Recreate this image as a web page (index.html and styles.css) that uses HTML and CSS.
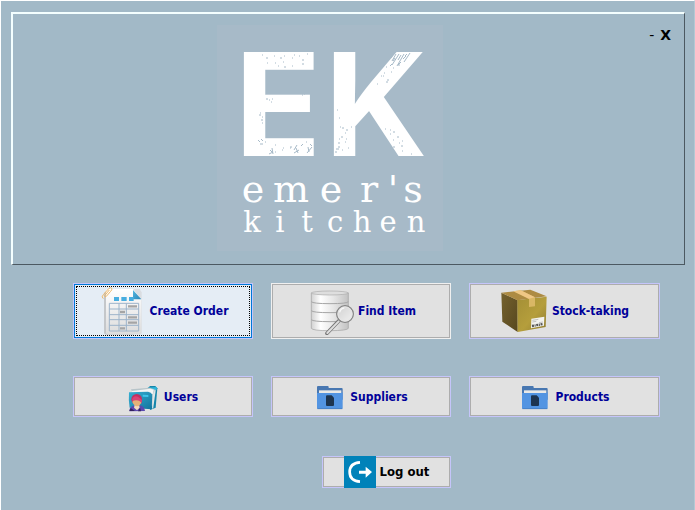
FILE: index.html
```html
<!DOCTYPE html>
<html lang="en">
<head>
<meta charset="utf-8">
<title>Emer's Kitchen</title>
<link rel="stylesheet" href="styles.css">
</head>
<body>
<header class="banner">
  <svg class="logo" viewBox="217 25 226 226" role="img" aria-label="EK emer's kitchen">
    <rect class="logo-bg" x="217" y="25" width="226" height="226"/>
    <text class="mark" y="156" x="278 376">EK</text>
    <text class="name" y="202" x="253 291 331 369 393 413">emer's</text>
    <text class="place" y="232" x="252 280 307 335 362 388 416">kitchen</text>
    <g class="worn">
      <path d="M262 55h1m3 3h2m-1 5h1m6-7h1m5 2h2m2-2h1m-2 6h1m8-4h1m1-3h1m4 1h1m2 4h2m3-6h1m-6 10h2m-12 2h1m-9 1h2m-8-1h1m-4-3h1"/>
      <path d="M266 99h2m1 1h1m2-1h1m-2 3h1M302 95h1m1-1h1M259 115h2m1 2h1m-2 3h2m-1 3h1m-3-10h1M258 140l2 2m1-3l2 2m-3 3h3m2-2h1M270 150l3 3m-1-5l1 6m-4 0l4-2m2 0h1M294 150l3-5m-3 8l5-3m-3-2l2 5m3-7l2-2m4 9l5-6m-4 0l1 5m1-8l2 2m-22 1h2m-10 3h1m-8-5h1m30-3h1m-17 6h1m-8 0h1"/>
      <path d="M394 53l-3 5m5-4l-4 7m7-7l-7 11m9-10l-3 5m6-6l-7 12m9-10l-3 3m4-5l-2 2m5-3l-6 9m-6 3l3-3m-8-1l2-3m-5 8l2-2m6 1h2m-7 3h1m-8-1h1m-3 6h1m-4 3h1m9-4h1m-9 4h1m3 4h2m-3 2h2m-11 2h1"/>
      <path d="M337 110h1m1 8h1m2 10h2m2 2h2m3-3h1m-7 6h1m-5 4h2m-4 2h1m-2 4h2m-2 4h2m5-5h1m-10 7h3m3 1h1m-8 2h2m9-13h1m1 9h1m-9-21h1M390 130h1m2 2h2m2 5h2m-9-3h1m2 6h1m5 3h1m1 3h2m-10 1h2m-2 3h1m8 1h1m-1-10h1m-18-12h1m25 25h1"/>
    </g>
  </svg>
  <div class="window-controls">
    <button type="button" class="window-control minimise" aria-label="Minimise">-</button>
    <button type="button" class="window-control" aria-label="Close">X</button>
  </div>
</header>

<main class="menu">
  <button type="button" class="item tall selected">
    <svg class="icon-lg" viewBox="114 36 144 144" aria-hidden="true">
      <defs>
        <linearGradient id="sheet" x1="0" y1="0" x2="0" y2="1"><stop offset="0" stop-color="#fff"/><stop offset="1" stop-color="#dcdcdc"/></linearGradient>
        <linearGradient id="fold" x1="0" y1="0" x2="1" y2="1"><stop offset="0" stop-color="#55b6e0"/><stop offset="1" stop-color="#2987b8"/></linearGradient>
      </defs>
      <path d="M132 54l12-8h80v130l-4 3h-82q-6-1-6-6z" fill="#c4c7ca"/>
      <path d="M219 42h20l6 10v122q0 4-5 4h-20z" fill="#dadde1"/>
      <path d="M143 42h76l25 31v100q0 5-5 5h-96q-5 0-5-5V48q0-6 5-6z" fill="url(#sheet)"/>
      <path d="M219 45l25 28h-25z" fill="url(#fold)"/>
      <path d="M162 66h15v12h-15zM184 66h16v12h-16zM207 66h14v12h-14z" fill="#48aee0"/>
      <path d="M148 85h88v83h-88zM148 102h88M148 119h88M148 134h88M148 151h88M177 85v83M199 85v83" fill="none" stroke="#9db4ca" stroke-width="3"/>
      <path d="M204 94h27M180 111h15M204 127h27M204 143h27M180 160h15" fill="none" stroke="#a5a5a5" stroke-width="7"/>
      <path d="M130 71q-7-5 0-12l16-18q6-6 9-1 2 4-3 9l-14 16q-4 2-4-3l14-17" fill="none" stroke="#efb766" stroke-width="3"/>
    </svg>
    <span>Create Order</span>
  </button>
  <button type="button" class="item tall plain">
    <svg class="icon-lg" viewBox="132 36 144 144" aria-hidden="true">
      <defs>
        <linearGradient id="drum" x1="0" y1="0" x2="1" y2="0"><stop offset="0" stop-color="#d2d2d2"/><stop offset=".25" stop-color="#fff"/><stop offset=".6" stop-color="#e6e6e6"/><stop offset="1" stop-color="#c2c2c2"/></linearGradient>
        <linearGradient id="lens" x1="0" y1="0" x2="1" y2="1"><stop offset="0" stop-color="#d0d0d0"/><stop offset="1" stop-color="#f2f2f2"/></linearGradient>
      </defs>
      <path d="M148 54v106q3 7 56 7 52 0 55-7V54z" fill="url(#drum)" stroke="#a0a0a0" stroke-width="2"/>
      <ellipse cx="203.500" cy="54" rx="55.500" ry="6" fill="#dedede" stroke="#aaa" stroke-width="2"/>
      <path d="M148 80q4 6 56 6t55-6M148 107q4 6 56 6t55-6M148 134q4 6 56 6t55-6" fill="none" stroke="#a6a6a6" stroke-width="3"/>
      <path d="M230 138l-35 37" stroke="#777" stroke-width="11" stroke-linecap="round"/>
      <path d="M230 139l-34 35" stroke="#dedede" stroke-width="6" stroke-linecap="round"/>
      <circle cx="249" cy="117" r="25" fill="url(#lens)" stroke="#858585" stroke-width="4"/>
      <circle cx="249" cy="117" r="21" fill="none" stroke="#e6e6e6" stroke-width="3"/>
      <path d="M233 112q3-12 14-13" fill="none" stroke="#f8f8f8" stroke-width="4"/>
    </svg>
    <span>Find Item</span>
  </button>
  <button type="button" class="item tall">
    <svg class="icon-lg" viewBox="111 36 144 144" aria-hidden="true">
      <defs>
        <linearGradient id="side" x1="0" y1="0" x2="1" y2="1"><stop offset="0" stop-color="#75622e"/><stop offset="1" stop-color="#57471f"/></linearGradient>
        <linearGradient id="front" x1="0" y1="0" x2="1" y2="1"><stop offset="0" stop-color="#a48f36"/><stop offset=".55" stop-color="#b59e3c"/><stop offset="1" stop-color="#8d7b32"/></linearGradient>
      </defs>
      <path d="M115 53l49 23v95l-46-31z" fill="url(#side)"/>
      <path d="M163 75l88-10-3 91-84 15z" fill="url(#front)"/>
      <path d="M115 53l87-9 49 20-88 12z" fill="#ad8b43"/>
      <path d="M151 49l22-3 43 21v27l-18 2V72z" fill="#d9b765"/>
      <path d="M151 49l22-3 43 21-18 4z" fill="#efc785"/>
      <path d="M205 131l39-6-1 27-39 8z" fill="#f3f3ee"/>
      <path d="M208 136l18-3M208 141l12-2M228 143l12-2" stroke="#aaa" stroke-width="2"/>
      <path d="M207 153l33-6" stroke="#555" stroke-width="7" stroke-dasharray="6 2 3 2"/>
    </svg>
    <span>Stock-taking</span>
  </button>

  <button type="button" class="item">
    <svg class="icon-sm" viewBox="207 36 96 96" aria-hidden="true">
      <defs>
        <linearGradient id="cover" x1="0" y1="0" x2="1" y2="1"><stop offset="0" stop-color="#38b0d3"/><stop offset="1" stop-color="#11739d"/></linearGradient>
      </defs>
      <path d="M267 57l6-6h16l6 7-5 58-17 7z" fill="#1686ab"/>
      <path d="M266 56l28-2-1 9-24 2z" fill="#31b6da"/>
      <path d="M216 61l57-5 15 6-7 49-50-14z" fill="#b7c4c9"/>
      <path d="M218 66l56-7 10 3-3 14-59 4z" fill="#f3f5f5"/>
      <path d="M210 70l57-2q10 1 13 9l-2 44-66-5q-4-24-2-46z" fill="url(#cover)"/>
      <path d="M281 79l6-16q3-3 3 2l-7 50-4 6z" fill="#dfe5e7"/>
      <path d="M251 77l17 1v6l-17-1z" fill="#3fc5eb"/>
      <path d="M211 127q0-15 17-18h14q14 2 16 17z" fill="#5b49af"/>
      <path d="M227 107h13l2 9-8 8-9-8z" fill="#f4d9bd"/>
      <circle cx="233" cy="91" r="16" fill="#c52e61"/>
      <path d="M220 99q2-10 19-10 8 2 7 14-4 9-12 9-9-1-14-13z" fill="#e5b078"/>
      <path d="M219 93q3-14 18-10l12 10-1 12q-4-15-27-10z" fill="#d94475"/>
      <path d="M215 117l13 9h-17zM243 116l3 11h-9z" fill="#34205f"/>
    </svg>
    <span>Users</span>
  </button>
  <button type="button" class="item">
    <svg class="icon-sm" viewBox="159 36 96 96" aria-hidden="true">
      <path d="M168 54q0-3 3-3h29q3 0 3 3v3h39q3 0 3 3v32h-77z" fill="#4877b1"/>
      <path d="M174 64h67v10h-67z" fill="#e9e9e7"/>
      <path d="M168 72h73l4-3v48q0 3-3 3h-71q-3 0-3-3z" fill="#5294e2"/>
      <path d="M169 119h75" stroke="#4178b9" stroke-width="2"/>
      <path d="M195 82q0-3 3-3h14l7 7v22q0 3-3 3h-18q-3 0-3-3z" fill="#1d344f"/>
    </svg>
    <span>Suppliers</span>
  </button>
  <button type="button" class="item">
    <svg class="icon-sm" viewBox="159 36 96 96" aria-hidden="true">
      <path d="M168 54q0-3 3-3h29q3 0 3 3v3h39q3 0 3 3v32h-77z" fill="#4877b1"/>
      <path d="M174 64h67v10h-67z" fill="#e9e9e7"/>
      <path d="M168 72h73l4-3v48q0 3-3 3h-71q-3 0-3-3z" fill="#5294e2"/>
      <path d="M169 119h75" stroke="#4178b9" stroke-width="2"/>
      <path d="M195 82q0-3 3-3h14l7 7v22q0 3-3 3h-18q-3 0-3-3z" fill="#1d344f"/>
    </svg>
    <span>Products</span>
  </button>

  <button type="button" class="item logout">
    <svg class="icon-sm" viewBox="102 33 96 96" aria-hidden="true">
      <path d="M102 33h96v96h-96z" fill="#0082b9"/>
      <path d="M150 52q-31 2-31 29t31 29" fill="none" stroke="#fff" stroke-width="8"/>
      <path d="M147 77h20V65l19 16-19 17V86h-20z" fill="#fff"/>
    </svg>
    <span>Log out</span>
  </button>
</main>
</body>
</html>
```
FILE: styles.css
```css
* {
  box-sizing: border-box;
}

body {
  margin: 0;
  min-height: 100vh;
  padding: 11px 9px 20px 10px;
  border: 1px solid #fff;
  border-right-color: #b4c8d3;
  border-bottom: 0;
  background: #a2b9c7;
  font-family: "DejaVu Sans Condensed", "DejaVu Sans", sans-serif;
  font-size: 12px;
  font-weight: bold;
}

button {
  margin: 0;
  padding: 0;
  font: inherit;
  color: #000;
}

.banner {
  display: grid;
  grid-template-columns: 204fr 226px 241fr;
  padding: 11px 0 13px;
  border: 2px solid #f4ffff;
  border-right: 1px solid #4c5962;
  border-bottom: 1px solid #4c5962;
}

.logo {
  grid-column: 2;
  display: block;
  width: 226px;
  height: 226px;
  overflow: visible;
}

.logo-bg {
  fill: #a7bac8;
}

.logo text {
  fill: #fff;
  text-anchor: middle;
}

.mark {
  font-family: Inter, sans-serif;
  font-size: 143px;
  font-weight: bold;
}

.name,
.place {
  font-family: "DejaVu Serif", serif;
  font-weight: normal;
}

.name {
  font-size: 38px;
}

.place {
  font-size: 29px;
}

.worn {
  fill: none;
  stroke: #a7bac8;
  stroke-width: 1;
}

.window-controls {
  display: flex;
  gap: 6px;
  justify-content: flex-end;
  align-items: flex-start;
  padding-right: 13px;
}

.window-control {
  border: 0;
  background: none;
  font-family: "DejaVu Sans", sans-serif;
  font-size: 14px;
  line-height: 20px;
}

.minimise {
  font-weight: normal;
}

.menu {
  display: grid;
  grid-template-columns: 180fr 180fr 191fr;
  column-gap: 18px;
  padding: 18px 25px 0 62px;
}

.item {
  display: flex;
  align-items: center;
  justify-content: center;
  gap: 4px;
  height: 41px;
  margin-bottom: 39px;
  border: 1px solid #c5c5fa;
  outline: 1px solid #adadad;
  outline-offset: -2px;
  background: #e1e1e1;
  color: #000099;
  line-height: 16px;
  white-space: nowrap;
}

.tall {
  height: 56px;
  margin-bottom: 37px;
}

.plain {
  border-color: #f0f0f0;
}

.selected {
  position: relative;
  background: #e5edf5;
  outline-color: #0078d7;
}

.selected::after {
  content: "";
  position: absolute;
  inset: 2px;
  border: 1px dotted #000;
}

.icon-lg {
  flex: none;
  width: 48px;
  height: 48px;
}

.icon-sm {
  position: relative;
  z-index: 1;
  flex: none;
  width: 32px;
  height: 32px;
}

.logout {
  grid-column: 2;
  justify-self: end;
  width: 129px;
  height: 32px;
  margin-bottom: 0;
  color: #000;
  font-size: 13px;
}
```
